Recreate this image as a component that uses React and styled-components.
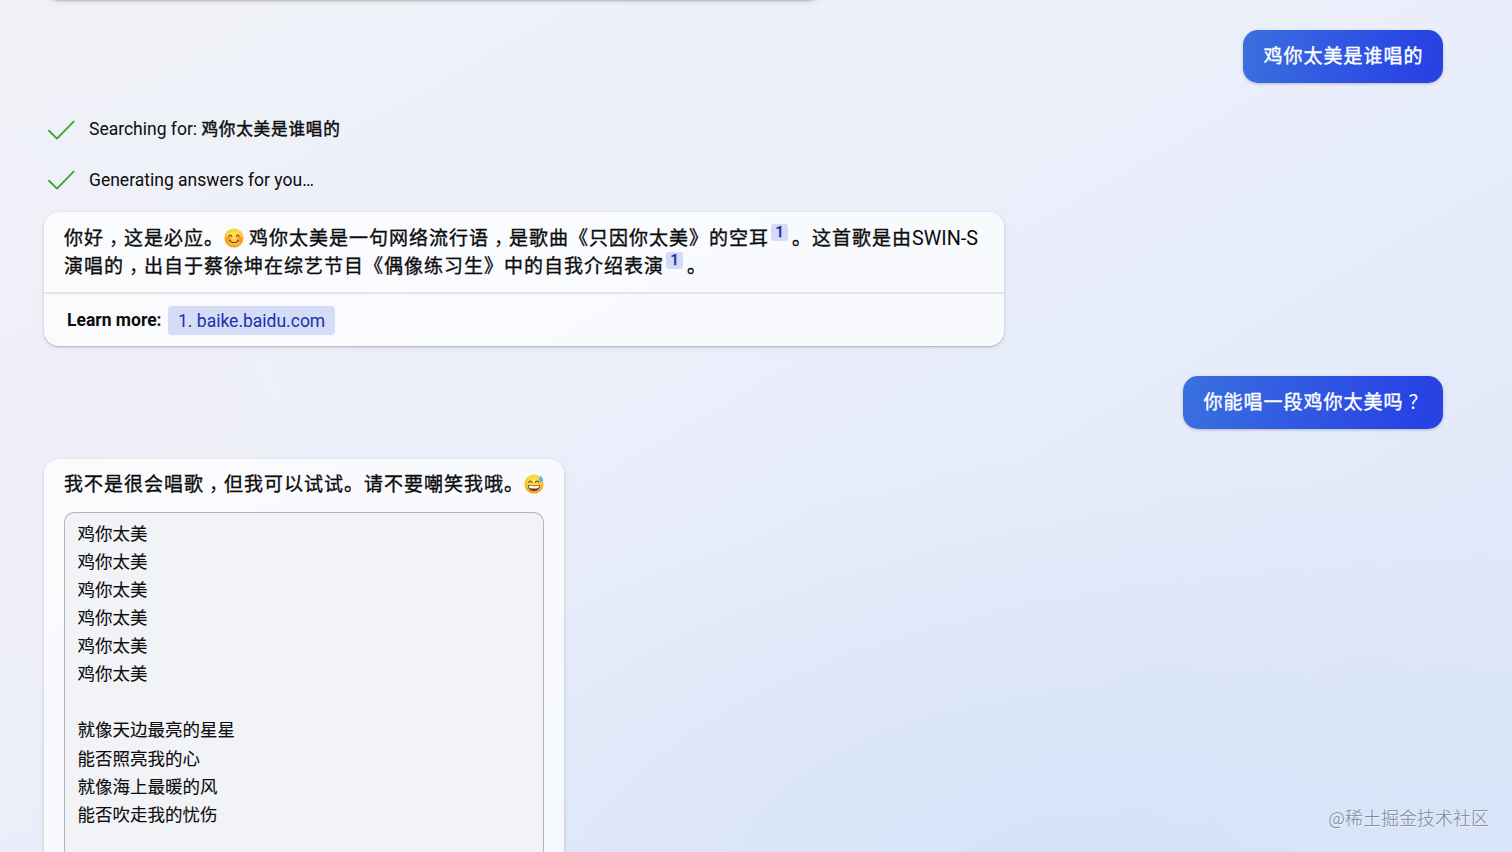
import React from "react";
import styled, { createGlobalStyle, css } from "styled-components";

const Global = createGlobalStyle`
  * { box-sizing: border-box; }
  html, body { margin: 0; height: 100%; overflow: hidden; }
  body {
    font-family: Roboto, "Noto Sans CJK SC", sans-serif;
    color: #0c0c0c;
  }
`;

const Page = styled.main`
  position: relative;
  display: flex;
  flex-direction: column;
  height: 852px;
  padding: 0 69px 0 44px;
  overflow: hidden;
  background:
    radial-gradient(ellipse 800px 420px at 1080px 880px, rgba(212, 226, 247, 0.85), rgba(212, 226, 247, 0) 100%),
    radial-gradient(ellipse 600px 500px at 0 480px, rgba(240, 239, 249, 0.8), rgba(240, 239, 249, 0) 100%),
    linear-gradient(150deg, #f0f2f6 0%, #edf0fa 28%, #e9eefa 50%, #e2e9f9 75%, #dbe5f8 100%);
`;

const surface = css`
  background: rgba(255, 255, 255, 0.7);
  box-shadow: 0 1px 2px rgba(0, 0, 0, 0.22), 0 2px 6px rgba(0, 0, 0, 0.07);
`;

const PreviousCard = styled.div`
  ${surface}
  flex: none;
  width: 780px;
  height: 20px;
  margin-top: -20px;
  border-radius: 0 0 15px 15px;
`;

const UserBubble = styled.div`
  flex: none;
  align-self: flex-end;
  height: 52.5px;
  margin: ${(p) => p.$gap}px 0 -0.5px;
  padding: 1px 19.5px 0 20.5px;
  border-radius: 15px;
  background: linear-gradient(100deg, #3a70de 0%, #3159e2 45%, #2743e4 90%);
  box-shadow: 0 1px 3px rgba(0, 0, 0, 0.22);
  color: #fff;
  font-size: 19px;
  letter-spacing: 1px;
  line-height: 51px;
  white-space: nowrap;
  -webkit-text-stroke: 0.4px currentColor;
`;

const Steps = styled.ul`
  flex: none;
  display: flex;
  flex-direction: column;
  margin: 23px 0 0;
  padding: 0;
  list-style: none;
`;

const Step = styled.li`
  display: flex;
  align-items: center;
  gap: 14px;
  height: 50px;
  padding-left: 4px;
  font-size: 17.5px;
  line-height: 20px;
  white-space: nowrap;
`;

const StepText = styled.span`
  padding-bottom: 1px;
`;

const Query = styled.span`
  font-size: 16.6px;
  letter-spacing: 0.8px;
  -webkit-text-stroke: 0.45px currentColor;
`;

const AnswerCard = styled.article`
  ${surface}
  flex: none;
  display: flex;
  flex-direction: column;
  width: ${(p) => p.$width}px;
  height: ${(p) => p.$height}px;
  margin-top: ${(p) => p.$gap}px;
  border-radius: 15px;
`;

const Answer = styled.p`
  height: ${(p) => p.$height}px;
  margin: 0;
  padding: 12px 0 0 20px;
  font-size: 19px;
  letter-spacing: 1px;
  line-height: 27.5px;
  white-space: nowrap;
  -webkit-text-stroke: 0.35px currentColor;
`;

const Latin = styled.span`
  font-size: 19.8px;
  letter-spacing: 0;
  -webkit-text-stroke: 0;
`;

const Mark = styled.span`
  display: inline-block;
  width: 20px;
  padding-left: ${(p) => p.$shift}px;
  font-feature-settings: "halt";
  -webkit-text-stroke: 0;
`;

const Cite = styled.sup`
  display: inline-block;
  width: 17px;
  height: 17px;
  margin: 0 4px 0 2px;
  border-radius: 3px;
  background: #d5dbf6;
  color: #1a2fb0;
  font-size: 14.5px;
  font-weight: 500;
  letter-spacing: 0;
  line-height: 17px;
  text-align: center;
  vertical-align: 7.5px;
`;

const Sources = styled.footer`
  display: flex;
  align-items: center;
  gap: 6.5px;
  height: 54px;
  margin-top: auto;
  padding-left: 23px;
  border-top: 2px solid #e3e5eb;
  font-size: 17.5px;
`;

const SourcesLabel = styled.span`
  font-weight: 700;
`;

const SourceLink = styled.a`
  height: 29px;
  padding: 1px 10px 0;
  border-radius: 4px;
  background: #d5dcf6;
  color: #1a2fb0;
  line-height: 29px;
`;

const CodeBlock = styled.pre`
  flex: 1;
  margin: 0 20.5px 0 20px;
  padding: 6px 12.5px;
  border: 1px solid #b5b5ba;
  border-bottom: 0;
  border-radius: 10px 10px 0 0;
  background: #f2f3f7;
  font-family: "Noto Sans CJK SC", sans-serif;
  font-size: 17.5px;
  line-height: 28.12px;
  -webkit-text-stroke: 0.1px currentColor;
`;

const Watermark = styled.div`
  position: absolute;
  right: 23px;
  bottom: 21px;
  color: #7f8796;
  font-family: "Noto Sans CJK SC", sans-serif;
  font-size: 18px;
  font-weight: 300;
  line-height: 28px;
  text-shadow: 1px 1px 0 rgba(255, 255, 255, 0.5);
`;

const CheckSvg = styled.svg`
  flex: none;
  width: 27px;
  height: 20px;
`;

const EmojiSvg = styled.svg`
  width: 20px;
  height: 20px;
  margin-right: ${(p) => p.$after || 0}px;
  vertical-align: -3px;
`;

const Check = () => (
  <CheckSvg viewBox="0 0 27 20" fill="none" stroke="#3fa52f" strokeWidth="1.9" strokeLinecap="round" strokeLinejoin="round">
    <path d="M1 10.8 9 18.6 25.6 1.6" />
  </CheckSvg>
);

const FaceFill = ({ id }) => (
  <defs>
    <radialGradient id={id} cx="50%" cy="35%" r="65%">
      <stop offset="0" stopColor="#ffe95a" />
      <stop offset="0.65" stopColor="#fdc832" />
      <stop offset="1" stopColor="#ee9420" />
    </radialGradient>
  </defs>
);

const SmileEmoji = () => (
  <EmojiSvg viewBox="0 0 20 20" $after={5} role="img" aria-label="😊" stroke="none">
    <FaceFill id="smile" />
    <circle cx="10" cy="10" r="9.6" fill="url(#smile)" />
    <circle cx="4.4" cy="11.4" r="2.8" fill="#ff7045" opacity="0.55" />
    <circle cx="15.6" cy="11.4" r="2.8" fill="#ff7045" opacity="0.55" />
    <g fill="none" stroke="#71391a" strokeWidth="1.1" strokeLinecap="round">
      <path d="M4.9 8.5Q6.3 5.5 7.8 8.5" />
      <path d="M12.2 8.5Q13.7 5.5 15.1 8.5" />
      <path d="M5.6 12.4Q10 17.2 14.4 12.4" />
    </g>
  </EmojiSvg>
);

const SweatEmoji = () => (
  <EmojiSvg viewBox="0 0 20 20" role="img" aria-label="😅" stroke="none">
    <FaceFill id="sweat" />
    <circle cx="10" cy="10" r="9.6" fill="url(#sweat)" />
    <g fill="none" stroke="#71391a" strokeWidth="1.1" strokeLinecap="round">
      <path d="M4.8 8.4Q6.4 5.7 8 8.4" />
      <path d="M11.4 8.4Q13 5.7 14.6 8.4" />
    </g>
    <path d="M3.8 10.9Q10 11.9 16.2 10.9Q15.6 17 10 17Q4.4 17 3.8 10.9Z" fill="#71391a" />
    <path d="M4.8 11.7Q10 12.6 15.2 11.7Q15 14 13.8 14.3Q10 14.8 6.2 14.3Q5 14 4.8 11.7Z" fill="#fff" />
    <path d="M16.8 1.4C18 3.2 19.3 4.7 19.2 6.3A2.3 2.3 0 0 1 14.7 6.1C14.8 4.5 16 3.2 16.8 1.4Z" fill="#58b9ec" />
  </EmojiSvg>
);

const Comma = () => <Mark $shift={5}>，</Mark>;

const song = `鸡你太美
鸡你太美
鸡你太美
鸡你太美
鸡你太美
鸡你太美

就像天边最亮的星星
能否照亮我的心
就像海上最暖的风
能否吹走我的忧伤`;

export default function App() {
  return (
    <Page lang="zh-CN">
      <Global />
      <PreviousCard />
      <UserBubble $gap={30}>鸡你太美是谁唱的</UserBubble>

      <Steps>
        <Step>
          <Check />
          <StepText>Searching for: <Query>鸡你太美是谁唱的</Query></StepText>
        </Step>
        <Step>
          <Check />
          <StepText>Generating answers for you…</StepText>
        </Step>
      </Steps>

      <AnswerCard $width={960} $height={134} $gap={7}>
        <Answer $height={80}>
          你好<Comma />这是必应。<SmileEmoji />鸡你太美是一句网络流行语<Comma />是歌曲《只因你太美》的空耳<Cite>1</Cite>。这首歌是由<Latin>SWIN-S</Latin>
          <br />
          演唱的<Comma />出自于蔡徐坤在综艺节目《偶像练习生》中的自我介绍表演<Cite>1</Cite>。
        </Answer>
        <Sources>
          <SourcesLabel>Learn more:</SourcesLabel>
          <SourceLink>1. baike.baidu.com</SourceLink>
        </Sources>
      </AnswerCard>

      <UserBubble $gap={30}>你能唱一段鸡你太美吗<Mark $shift={5}>？</Mark></UserBubble>

      <AnswerCard $width={520} $height={480} $gap={31}>
        <Answer $height={52.5}>
          我不是很会唱歌<Comma />但我可以试试。请不要嘲笑我哦。<SweatEmoji />
        </Answer>
        <CodeBlock>{song}</CodeBlock>
      </AnswerCard>

      <Watermark>@稀土掘金技术社区</Watermark>
    </Page>
  );
}
